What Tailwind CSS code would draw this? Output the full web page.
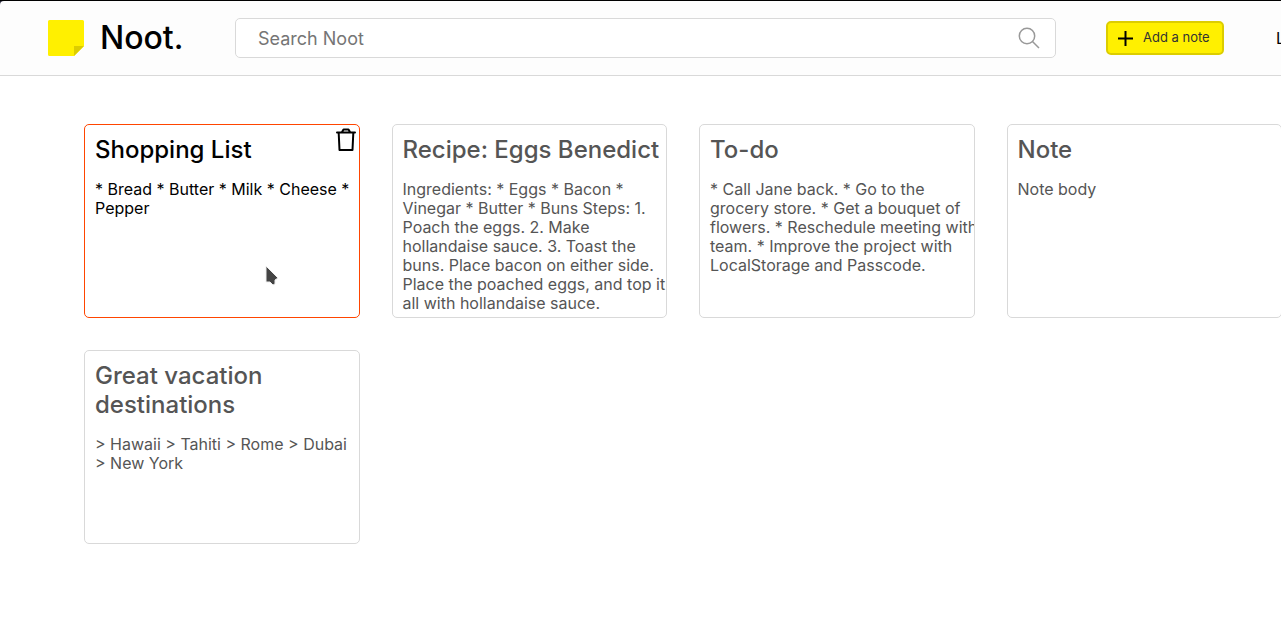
<!DOCTYPE html>
<html lang="en">
<head>
<meta charset="utf-8">
<title>Noot.</title>
<script src="https://cdn.jsdelivr.net/npm/@tailwindcss/browser@4"></script>
</head>
<body class="min-h-screen overflow-x-hidden bg-white font-['Inter',sans-serif] text-black">
<header class="border-t border-black bg-[#26263a]">
  <div class="flex h-[75px] items-center overflow-hidden rounded-tl border-b border-[#d9d9d9] bg-[#fdfdfd] pl-12">
    <a href="#" class="flex w-[187px] shrink-0 items-center gap-4">
      <svg class="size-9" viewBox="0 0 36 36" aria-hidden="true">
        <path d="M1.500 0h33A1.500 1.500 0 0 1 36 1.500V26L26 36H1.500A1.500 1.500 0 0 1 0 34.500v-33A1.500 1.500 0 0 1 1.500 0Z" fill="#fff000"/>
        <path d="M26 26h10L26 36Z" fill="#dccd00"/>
      </svg>
      <span class="text-[32px] leading-9 font-medium">Noot.</span>
    </a>
    <form class="flex h-10 flex-1 items-center rounded-[5px] border border-[#d9d9d9] bg-white pr-[15px] pl-[22px]">
      <input type="search" aria-label="Search Noot" placeholder="Search Noot" class="h-full min-w-0 flex-1 text-lg outline-none placeholder:text-[#757575]">
      <button type="submit" aria-label="Search" class="shrink-0">
        <svg class="size-[22px]" viewBox="0 0 22 22" fill="none" stroke="#999" stroke-width="1.500" aria-hidden="true"><circle cx="9" cy="9" r="7.700"/><path d="m14.500 14.500 6.500 6.500"/></svg>
      </button>
    </form>
    <button type="button" class="ml-[50px] flex h-[34px] w-[118px] shrink-0 items-center gap-2.5 rounded-[5px] border-2 border-[#dccd00] bg-[#fff000] pl-2.5 text-[13px] whitespace-nowrap text-[#333]">
      <svg class="size-[15px] shrink-0" viewBox="0 0 15 15" stroke="#000" stroke-width="2" aria-hidden="true"><path d="M7.500 0v15M0 7.500h15"/></svg>
      Add a note
    </button>
    <a href="#" class="ml-[52px] w-[5px] shrink-0 text-base">L</a>
  </div>
</header>
<main class="-mr-px grid grid-cols-4 gap-8 pt-12 pl-[84px] text-[#555]">
  <article class="relative h-[194px] overflow-hidden rounded-[5px] border border-[#ff4500] pt-2.5 pl-2.5 text-black">
    <h2 class="text-2xl leading-[29px] font-medium">Shopping List</h2>
    <p class="mt-4 -mr-1.5 text-base leading-[19px]">* Bread * Butter * Milk * Cheese * Pepper</p>
    <button type="button" aria-label="Delete note" class="absolute top-[3px] right-[3px]">
      <svg class="h-6 w-5" viewBox="0 0 20 24" fill="none" stroke="#000" stroke-width="2" stroke-linecap="round" stroke-linejoin="round" aria-hidden="true"><path d="M1 4.500h18M2.700 5l.8 17h13l.8-17M6 4L7.500 1.500h5L14 4"/></svg>
    </button>
    <svg class="absolute top-[140px] left-[180px] h-[22px] w-[14px]" viewBox="0 0 14 22" aria-hidden="true"><path d="M1 1v16h4l3 3 2-1v-4l3-2Z" fill="#444" stroke="#eee" stroke-width="1"/></svg>
  </article>
  <article class="h-[194px] overflow-hidden rounded-[5px] border border-[#d9d9d9] pt-2.5 pl-2.5">
    <h2 class="text-2xl leading-[29px] font-medium whitespace-nowrap">Recipe: Eggs Benedict</h2>
    <p class="mt-4 -mr-1.5 text-base leading-[19px]">Ingredients: * Eggs * Bacon * Vinegar * Butter * Buns Steps: 1. Poach the eggs. 2. Make hollandaise sauce. 3. Toast the buns. Place bacon on either side. Place the poached eggs, and top it all with hollandaise sauce.</p>
  </article>
  <article class="h-[194px] overflow-hidden rounded-[5px] border border-[#d9d9d9] pt-2.5 pl-2.5">
    <h2 class="text-2xl leading-[29px] font-medium">To-do</h2>
    <p class="mt-4 -mr-1.5 text-base leading-[19px]">* Call Jane back. * Go to the grocery store. * Get a bouquet of flowers. * Reschedule meeting with team. * Improve the project with LocalStorage and Passcode.</p>
  </article>
  <article class="h-[194px] overflow-hidden rounded-[5px] border border-[#d9d9d9] pt-2.5 pl-2.5">
    <h2 class="text-2xl leading-[29px] font-medium">Note</h2>
    <p class="mt-4 -mr-1.5 text-base leading-[19px]">Note body</p>
  </article>
  <article class="h-[194px] overflow-hidden rounded-[5px] border border-[#d9d9d9] pt-2.5 pl-2.5">
    <h2 class="text-2xl leading-[29px] font-medium">Great vacation destinations</h2>
    <p class="mt-4 text-base leading-[19px]">&gt; Hawaii &gt; Tahiti &gt; Rome &gt; Dubai<br>&gt; New York</p>
  </article>
</main>
</body>
</html>
